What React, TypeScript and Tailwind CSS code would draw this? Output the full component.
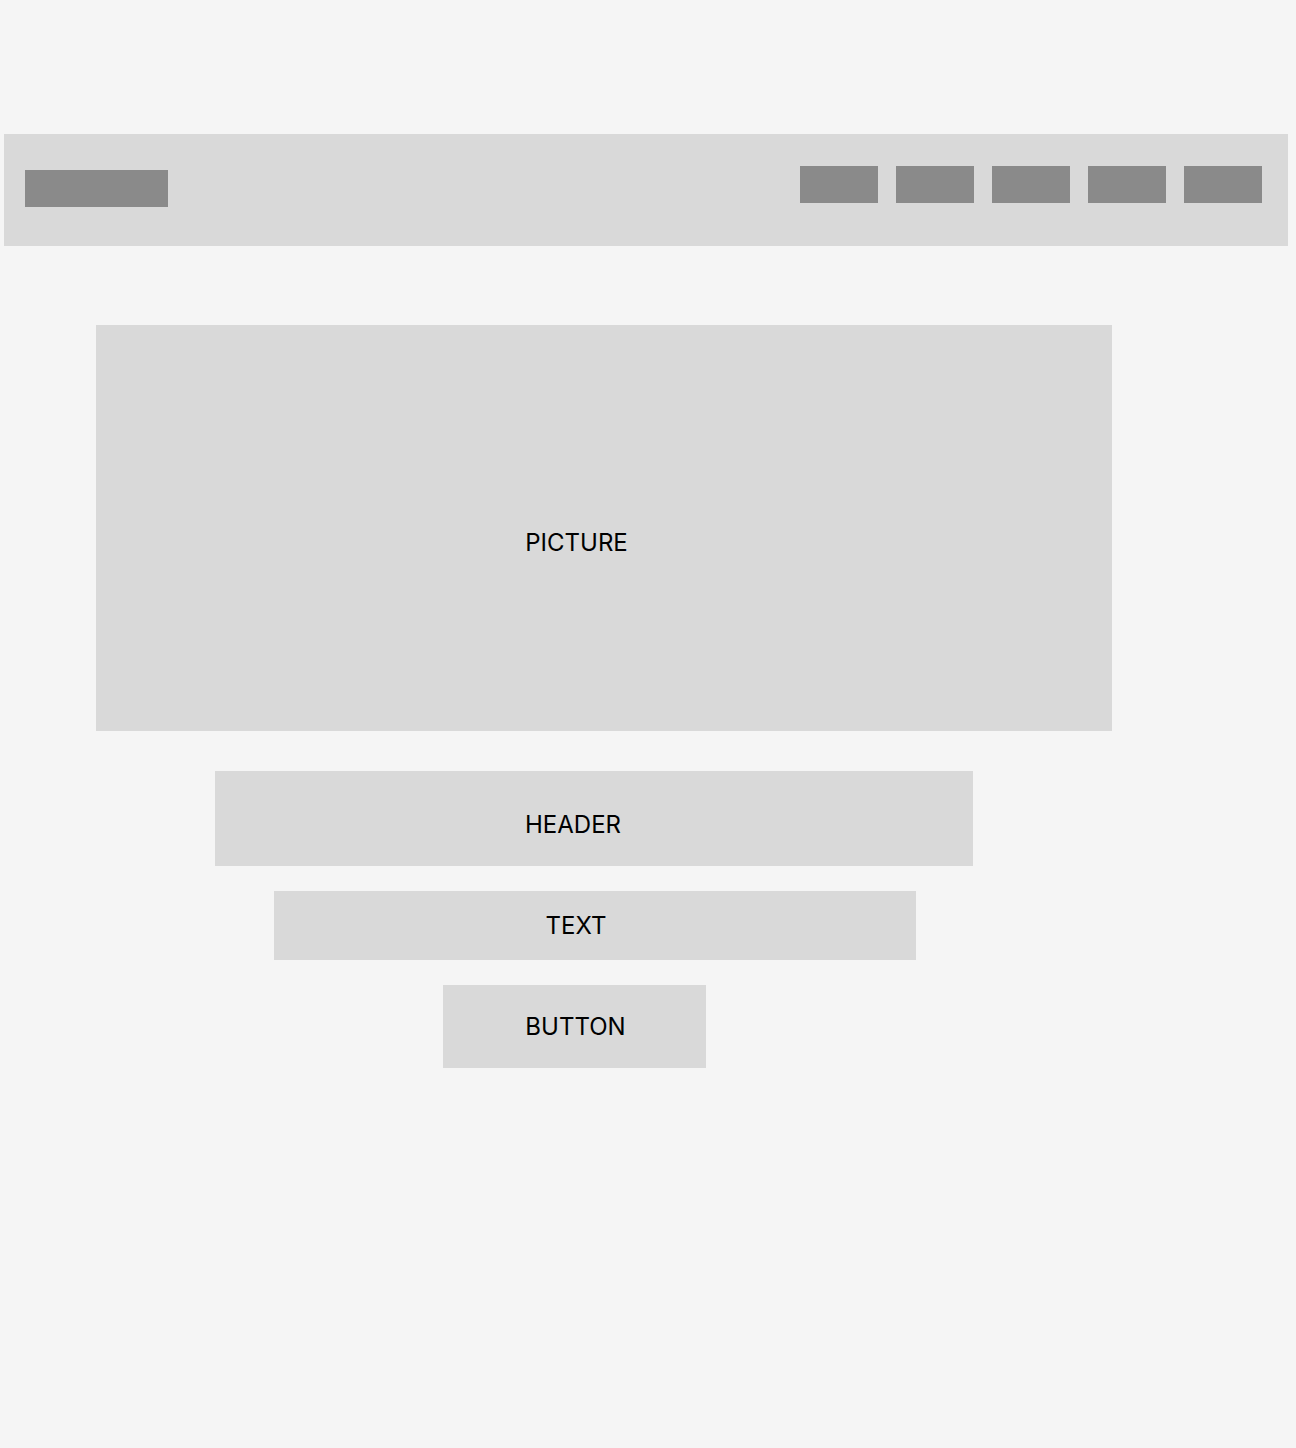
export default function App() {
  return (
    <div className="flex min-h-[1448px] w-full flex-col items-start bg-[#f5f5f5] pt-[134px] font-['Inter',sans-serif] text-[24px] text-black">
      {/* Nav bar */}
      <div className="ml-[4px] flex h-[112px] w-[1284px] items-start justify-between bg-[#d9d9d9]">
        <div className="ml-[21px] mt-[36px] h-[37px] w-[143px] bg-[#8a8a8a]" />
        <div className="mr-[26px] mt-[32px] flex gap-[18px]">
          {[0, 1, 2, 3, 4].map((i) => (
            <div key={i} className="h-[37px] w-[78px] bg-[#8a8a8a]" />
          ))}
        </div>
      </div>

      {/* Picture */}
      <div className="ml-[96px] mt-[79px] flex h-[406px] w-[1016px] items-center justify-center bg-[#d9d9d9] pr-[55px] pt-[30px]">
        PICTURE
      </div>

      {/* Header */}
      <div className="ml-[215px] mt-[40px] flex h-[95px] w-[758px] items-center justify-center bg-[#d9d9d9] pr-[42px] pt-[13px]">
        HEADER
      </div>

      {/* Text */}
      <div className="ml-[274px] mt-[25px] flex h-[69px] w-[642px] items-center justify-center bg-[#d9d9d9] pr-[38px]">
        TEXT
      </div>

      {/* Button */}
      <div className="ml-[443px] mt-[25px] flex h-[83px] w-[263px] items-center justify-center bg-[#d9d9d9] pl-[2px]">
        BUTTON
      </div>
    </div>
  );
}
